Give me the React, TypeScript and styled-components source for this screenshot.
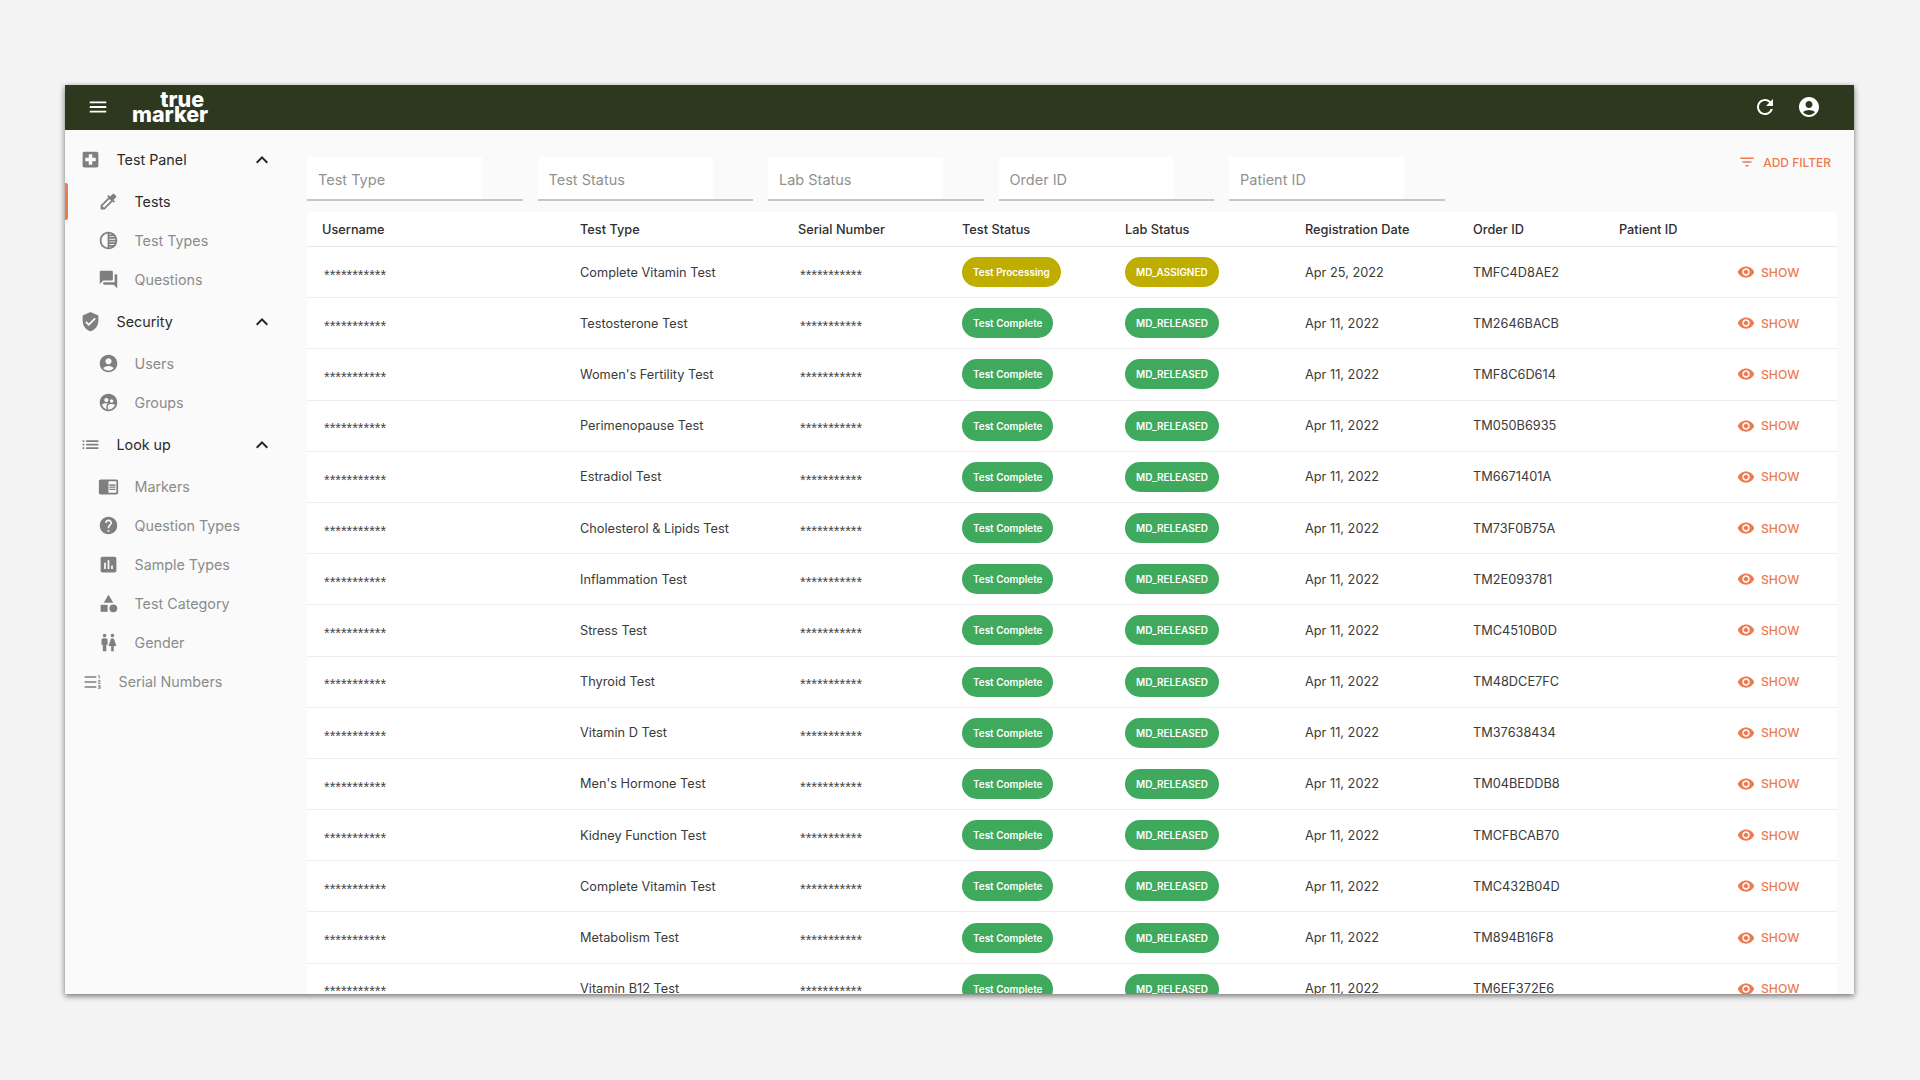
import React from 'react';
import styled, { createGlobalStyle } from 'styled-components';
import {
  MdAccountCircle,
  MdAssessment,
  MdCategory,
  MdChromeReaderMode,
  MdColorize,
  MdExpandLess,
  MdFilterList,
  MdFormatListNumberedRtl,
  MdHelp,
  MdList,
  MdLocalHospital,
  MdMenu,
  MdQuestionAnswer,
  MdRefresh,
  MdSupervisedUserCircle,
  MdTonality,
  MdVerifiedUser,
  MdVisibility,
  MdWc,
} from 'react-icons/md';

const GlobalStyle = createGlobalStyle`
  html, body {
    margin: 0;
    padding: 0;
    background: #f4f4f4;
    font-family: Inter, "Liberation Sans", sans-serif;
  }
`;

const Page = styled.div`
  width: 1920px;
  height: 1080px;
  box-sizing: border-box;
  padding: 85px 66px 0 65px;
  overflow: hidden;
`;

const Window = styled.div`
  height: 909px;
  display: flex;
  flex-direction: column;
  overflow: hidden;
  background: #fafafa;
  box-shadow: 0 2px 6px rgba(0, 0, 0, 0.55);
`;

const AppBar = styled.header`
  flex: none;
  height: 45px;
  box-sizing: border-box;
  display: flex;
  align-items: center;
  padding: 0 33px 1px 22px;
  background: #2d381e;
  color: #fff;
`;

const MenuIcon = styled(MdMenu)`
  width: 22px;
  height: 22px;
`;

const Logo = styled.div`
  display: flex;
  flex-direction: column;
  align-items: flex-end;
  margin: -1px 0 0 23px;
  font-size: 21.5px;
  line-height: 15px;
  font-weight: 800;
  color: #fff;
  div:first-child {
    padding-right: 4px;
  }
`;

const AppBarActions = styled.div`
  margin-left: auto;
  display: flex;
  align-items: center;
  gap: 20px;
`;

const Body = styled.div`
  flex: 1;
  min-height: 0;
  display: flex;
`;

const Sidebar = styled.nav`
  flex: none;
  width: 242px;
  padding-top: 7px;
  box-sizing: border-box;
`;

const NavRow = styled.div<{ $active?: boolean }>`
  position: relative;
  height: 39px;
  display: flex;
  align-items: center;
  padding-left: 33px;
  font-size: 14.3px;
  color: ${(p) => (p.$active ? '#2b2b2b' : '#8b8b8b')};
  svg {
    color: #7f7f7f;
    width: 21px;
    height: 21px;
    flex: none;
  }
  span {
    margin-left: 15.5px;
  }
  ${(p) =>
    p.$active &&
    `&::before {
      content: '';
      position: absolute;
      left: 0;
      top: 1px;
      width: 3px;
      height: 37px;
      background: #ee7a4f;
      border-radius: 0 2px 2px 0;
    }`}
`;

const SectionRow = styled.div`
  height: 45px;
  display: flex;
  align-items: center;
  padding: 0 0 0 15px;
  font-size: 14.3px;
  color: #2b2b2b;
  svg {
    color: #7f7f7f;
    width: 21px;
    height: 21px;
    flex: none;
  }
  span {
    margin-left: 15.5px;
  }
`;

const Chevron = styled(MdExpandLess)`
  && {
    color: #222;
    width: 24px;
    height: 24px;
    margin-left: auto;
    margin-right: 33px;
  }
`;

const SerialRow = styled(SectionRow)`
  height: 39px;
  color: #8b8b8b;
  padding-left: 18px;
  svg {
    width: 20px;
    height: 20px;
  }
`;

const Main = styled.main`
  flex: 1;
  min-width: 0;
  padding: 27px 17px 0 0;
`;

const FilterBar = styled.div`
  display: flex;
  gap: 15px;
  height: 44px;
  margin-bottom: 11px;
`;

const FilterField = styled.div`
  width: 215.5px;
  box-sizing: border-box;
  border-bottom: 2px solid #c6c6c6;
`;

const FilterLabel = styled.div`
  width: 175px;
  height: 42px;
  box-sizing: border-box;
  padding: 2px 0 0 11px;
  display: flex;
  align-items: center;
  background: #fff;
  font-size: 14.5px;
  color: #919191;
`;

const AddFilter = styled.button`
  margin: -2px 0 0 auto;
  height: 14px;
  padding: 0 6px 0 0;
  border: 0;
  background: none;
  display: flex;
  align-items: center;
  gap: 7px;
  align-self: flex-start;
  font-family: inherit;
  font-size: 12px;
  font-weight: 500;
  color: #ee7a4f;
  svg {
    width: 18px;
    height: 18px;
  }
`;

const columns = '258px 218px 164px 163px 180px 168px 146px 118px 115px';

const Table = styled.div`
  background: #fff;
  color: #333;
`;

const HeadRow = styled.div`
  display: grid;
  grid-template-columns: ${columns};
  height: 35px;
  align-items: center;
  box-sizing: border-box;
  border-bottom: 1px solid #e8e8e8;
  font-size: 12.75px;
  font-weight: 500;
  color: #2e2e2e;
`;

const BodyRow = styled.div`
  display: grid;
  grid-template-columns: ${columns};
  height: 51.2px;
  align-items: center;
  box-sizing: border-box;
  border-bottom: 1px solid #ececec;
  font-size: 12.75px;
  color: #3a3a3a;
`;

const Cell = styled.div`
  padding-left: 15px;
  white-space: nowrap;
`;

const Mask = styled(Cell)`
  padding-left: 17px;
  padding-top: 6px;
  font-family: "Liberation Sans", sans-serif;
  font-size: 14.5px;
  color: #444;
  line-height: 1;
`;

const Chip = styled.span<{ $tone: 'green' | 'yellow' }>`
  display: inline-flex;
  align-items: center;
  height: 30px;
  padding: 0 11px;
  border-radius: 15px;
  background: ${(p) => (p.$tone === 'green' ? '#3fa95e' : '#bfae00')};
  color: #fff;
  font-size: 9.95px;
  font-weight: 600;
`;

const ShowLink = styled(Cell)`
  display: flex;
  align-items: center;
  gap: 6px;
  color: #ee7a4f;
  font-size: 12.2px;
  font-weight: 500;
  svg {
    width: 18px;
    height: 18px;
  }
`;

const rows = [
  ['Complete Vitamin Test', 'Apr 25, 2022', 'TMFC4D8AE2'],
  ['Testosterone Test', 'Apr 11, 2022', 'TM2646BACB'],
  ["Women's Fertility Test", 'Apr 11, 2022', 'TMF8C6D614'],
  ['Perimenopause Test', 'Apr 11, 2022', 'TM050B6935'],
  ['Estradiol Test', 'Apr 11, 2022', 'TM6671401A'],
  ['Cholesterol & Lipids Test', 'Apr 11, 2022', 'TM73F0B75A'],
  ['Inflammation Test', 'Apr 11, 2022', 'TM2E093781'],
  ['Stress Test', 'Apr 11, 2022', 'TMC4510B0D'],
  ['Thyroid Test', 'Apr 11, 2022', 'TM48DCE7FC'],
  ['Vitamin D Test', 'Apr 11, 2022', 'TM37638434'],
  ["Men's Hormone Test", 'Apr 11, 2022', 'TM04BEDDB8'],
  ['Kidney Function Test', 'Apr 11, 2022', 'TMCFBCAB70'],
  ['Complete Vitamin Test', 'Apr 11, 2022', 'TMC432B04D'],
  ['Metabolism Test', 'Apr 11, 2022', 'TM894B16F8'],
  ['Vitamin B12 Test', 'Apr 11, 2022', 'TM6EF372E6'],
];

const filters = ['Test Type', 'Test Status', 'Lab Status', 'Order ID', 'Patient ID'];
const heads = ['Username', 'Test Type', 'Serial Number', 'Test Status', 'Lab Status', 'Registration Date', 'Order ID', 'Patient ID', ''];

function App() {
  return (
    <Page>
      <GlobalStyle />
      <Window>
        <AppBar>
          <MenuIcon />
          <Logo>
            <div>true</div>
            <div>marker</div>
          </Logo>
          <AppBarActions>
            <MdRefresh size={24} />
            <MdAccountCircle size={24} />
          </AppBarActions>
        </AppBar>
        <Body>
          <Sidebar>
            <SectionRow>
              <MdLocalHospital />
              <span>Test Panel</span>
              <Chevron />
            </SectionRow>
            <NavRow $active>
              <MdColorize />
              <span>Tests</span>
            </NavRow>
            <NavRow>
              <MdTonality />
              <span>Test Types</span>
            </NavRow>
            <NavRow>
              <MdQuestionAnswer />
              <span>Questions</span>
            </NavRow>
            <SectionRow>
              <MdVerifiedUser />
              <span>Security</span>
              <Chevron />
            </SectionRow>
            <NavRow>
              <MdAccountCircle />
              <span>Users</span>
            </NavRow>
            <NavRow>
              <MdSupervisedUserCircle />
              <span>Groups</span>
            </NavRow>
            <SectionRow>
              <MdList />
              <span>Look up</span>
              <Chevron />
            </SectionRow>
            <NavRow>
              <MdChromeReaderMode />
              <span>Markers</span>
            </NavRow>
            <NavRow>
              <MdHelp />
              <span>Question Types</span>
            </NavRow>
            <NavRow>
              <MdAssessment />
              <span>Sample Types</span>
            </NavRow>
            <NavRow>
              <MdCategory />
              <span>Test Category</span>
            </NavRow>
            <NavRow>
              <MdWc />
              <span>Gender</span>
            </NavRow>
            <SerialRow>
              <MdFormatListNumberedRtl />
              <span>Serial Numbers</span>
            </SerialRow>
          </Sidebar>
          <Main>
            <FilterBar>
              {filters.map((f) => (
                <FilterField key={f}>
                  <FilterLabel>{f}</FilterLabel>
                </FilterField>
              ))}
              <AddFilter>
                <MdFilterList />
                ADD FILTER
              </AddFilter>
            </FilterBar>
            <Table>
              <HeadRow>
                {heads.map((h, i) => (
                  <Cell key={i}>{h}</Cell>
                ))}
              </HeadRow>
              {rows.map(([name, date, order], i) => (
                <BodyRow key={order}>
                  <Mask>***********</Mask>
                  <Cell>{name}</Cell>
                  <Mask>***********</Mask>
                  <Cell>
                    <Chip $tone={i === 0 ? 'yellow' : 'green'}>{i === 0 ? 'Test Processing' : 'Test Complete'}</Chip>
                  </Cell>
                  <Cell>
                    <Chip $tone={i === 0 ? 'yellow' : 'green'}>{i === 0 ? 'MD_ASSIGNED' : 'MD_RELEASED'}</Chip>
                  </Cell>
                  <Cell>{date}</Cell>
                  <Cell>{order}</Cell>
                  <Cell />
                  <ShowLink>
                    <MdVisibility />
                    SHOW
                  </ShowLink>
                </BodyRow>
              ))}
            </Table>
          </Main>
        </Body>
      </Window>
    </Page>
  );
}

export default App;
